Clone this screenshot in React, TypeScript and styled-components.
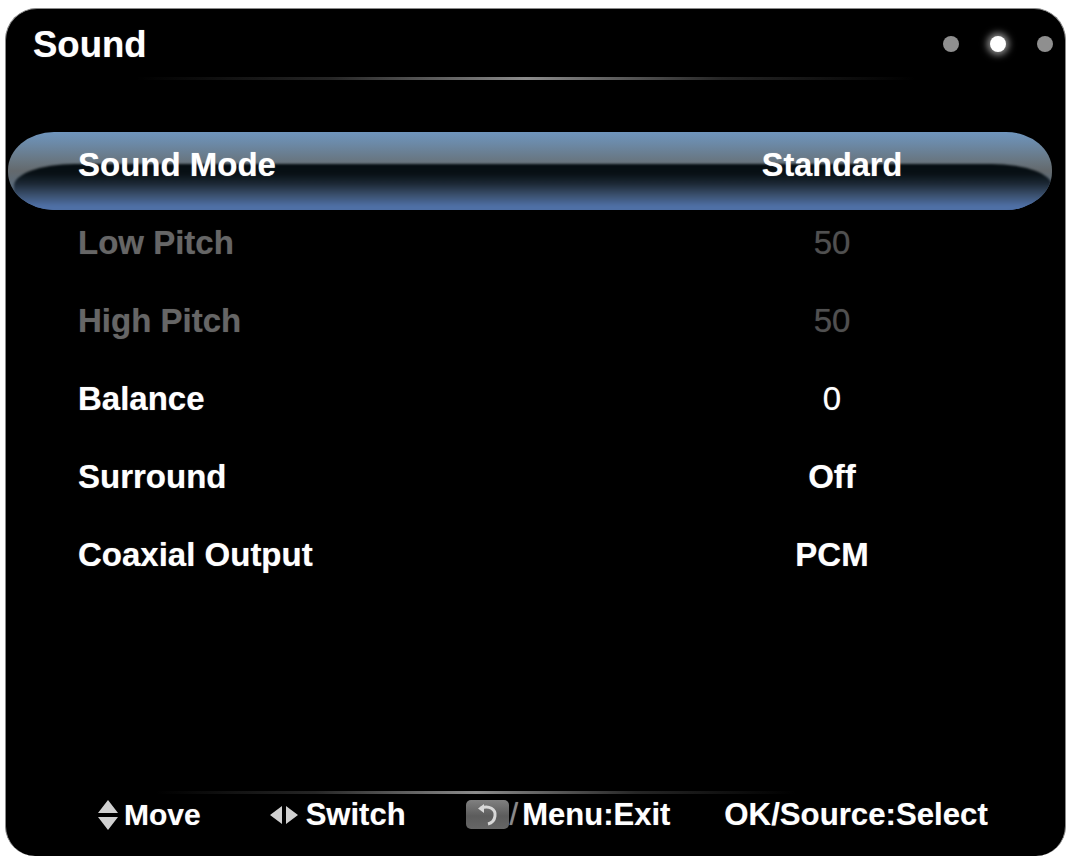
import React from 'react';
import styled, { createGlobalStyle } from 'styled-components';

const GlobalStyle = createGlobalStyle`
    html, body {
        margin: 0;
        padding: 0;
        background: #ffffff;
        overflow: hidden;
    }
`

const Panel = styled.div`
    box-sizing: border-box;
    width: 1061px;
    height: 848px;
    margin: 8px 0 0 5px;
    background: #000000;
    border: 1px solid #8a8a8a;
    border-bottom: none;
    border-radius: 32px 32px 30px 30px;
    font-family: "Liberation Sans", Arial, sans-serif;
    font-weight: 700;
    color: #ffffff;
    display: flex;
    flex-direction: column;
    overflow: hidden;
`

const Header = styled.div`
    height: 68px;
    padding: 2px 12px 0 27px;
    box-sizing: border-box;
    display: flex;
    justify-content: space-between;
    align-items: center;
`

const Title = styled.div`
    font-size: 36.5px;
    line-height: 72px;
    padding-top: 2px;
    text-shadow: 0 0 1px rgba(255, 255, 255, .5);
`

const Dots = styled.div`
    display: flex;
    align-items: center;
    gap: 31px;
`

const Dot = styled.span<{ $active?: boolean }>`
    width: 16px;
    height: 16px;
    border-radius: 50%;
    background: ${p => p.$active ? '#ffffff' : '#8f8f8f'};
    box-shadow: ${p => p.$active ? '0 0 7px 3px rgba(255,255,255,.55)' : 'none'};
    filter: blur(.6px);
`

const Divider = styled.div<{ $left: number, $width: number }>`
    height: 3px;
    width: ${p => p.$width}px;
    margin-left: ${p => p.$left}px;
    flex: none;
    background: linear-gradient(90deg, rgba(150,150,150,0), rgba(150,150,150,.25) 25%, #8c8c8c 50%, rgba(150,150,150,.25) 75%, rgba(150,150,150,0));
`

const List = styled.div`
    margin: 52px 13px 0 2px;
    flex: 1;
`

const Row = styled.div<{ $selected?: boolean, $disabled?: boolean }>`
    position: relative;
    box-sizing: border-box;
    height: 78px;
    padding: 0 80px 12px 70px;
    display: grid;
    grid-template-columns: 1fr 280px;
    align-items: center;
    font-size: 33px;
    color: ${p => p.$disabled ? '#666666' : '#ffffff'};
    text-shadow: 0 0 1px ${p => p.$disabled ? 'rgba(102,102,102,.5)' : 'rgba(255,255,255,.5)'};
    border-radius: 46px / 38px;
    overflow: hidden;
    background: ${p => p.$selected ? 'linear-gradient(180deg, #6f95bd 0%, #6c8aa8 14%, #68757f 38%, #63696d 50%, #566b80 78%, #4d6fa6 100%)' : 'transparent'};

    ${p => p.$selected && `
        &::before {
            content: '';
            position: absolute;
            left: 6px;
            right: 0;
            top: 32px;
            bottom: -2px;
            border-radius: 60px 60px 40px 40px / 22px 22px 18px 18px;
            background: linear-gradient(180deg, #050e12 0%, #081015 20%, #1b2733 40%, #3a4f6c 64%, #4f70a6 88%);
            filter: blur(1px);
        }
    `}
`

const Label = styled.span`
    position: relative;
`

const Value = styled.span<{ $regular?: boolean, $size?: number, $dim?: boolean }>`
    position: relative;
    text-align: center;
    font-weight: ${p => p.$regular ? 400 : 700};
    font-size: ${p => p.$size ?? 33}px;
    color: ${p => p.$dim ? '#505050' : 'inherit'};
`

const Footer = styled.div`
    box-sizing: border-box;
    height: 40px;
    padding: 1px 0 0 91px;
    display: flex;
    align-items: center;
    text-shadow: 0 0 1px rgba(255, 255, 255, .4);
    flex: none;
    margin-bottom: 22px;
`

const Hint = styled.div<{ $gap: number, $size?: number }>`
    display: flex;
    align-items: center;
    margin-right: ${p => p.$gap}px;
    font-size: ${p => p.$size ?? 31}px;
    white-space: nowrap;
`

const ArrowIcon = styled.svg<{ $space: number }>`
    flex: none;
    margin-right: ${p => p.$space}px;
    filter: blur(.5px);
`

const BackKey = styled.span`
    width: 43px;
    height: 29px;
    border-radius: 5px;
    background: linear-gradient(180deg, #808080, #5c5c5c 55%, #666666);
    display: inline-flex;
    align-items: center;
    justify-content: center;
    flex: none;
`

const Slash = styled.span`
    font-weight: 400;
    color: #8a8a8a;
    margin: 0 4px 0 1px;
`

const settings = [
    { label: 'Sound Mode', value: 'Standard', selected: true },
    { label: 'Low Pitch', value: '50', disabled: true, regular: true },
    { label: 'High Pitch', value: '50', disabled: true, regular: true },
    { label: 'Balance', value: '0', regular: true },
    { label: 'Surround', value: 'Off' },
    { label: 'Coaxial Output', value: 'PCM' },
]

const App: React.FunctionComponent = () => {
    return (
        <>
            <GlobalStyle />
            <Panel>
                <Header>
                    <Title>Sound</Title>
                    <Dots>
                        <Dot />
                        <Dot $active />
                        <Dot />
                    </Dots>
                </Header>
                <Divider $left={130} $width={780} />
                <List>
                    {settings.map(item => (
                        <Row key={item.label} $selected={item.selected} $disabled={item.disabled}>
                            <Label>{item.label}</Label>
                            <Value $regular={item.regular} $dim={item.disabled} $size={item.selected ? 32.4 : 33}>{item.value}</Value>
                        </Row>
                    ))}
                </List>
                <Divider $left={150} $width={640} />
                <Footer>
                    <Hint $gap={68} $size={30}>
                        <ArrowIcon $space={5} width="22" height="32" viewBox="0 0 22 32">
                            <path d="M11 1 L21 14 H1 Z M1 18 H21 L11 31 Z" fill="#d0d0d0" />
                        </ArrowIcon>
                        Move
                    </Hint>
                    <Hint $gap={60}>
                        <ArrowIcon $space={7} width="30" height="20" viewBox="0 0 30 20">
                            <path d="M13 1 V19 L1 10 Z M17 1 L29 10 L17 19 Z" fill="#d0d0d0" />
                        </ArrowIcon>
                        Switch
                    </Hint>
                    <Hint $gap={54}>
                        <BackKey>
                            <svg width="24" height="22" viewBox="0 0 24 22" fill="none">
                                <path d="M6 4 C14 1 21 5 20 12 C19.5 16 17 19 13 20" stroke="#d8d8d8" strokeWidth="3" />
                                <path d="M9 0 L3 4.5 L9 9 Z" fill="#d8d8d8" />
                            </svg>
                        </BackKey>
                        <Slash>/</Slash>
                        Menu:Exit
                    </Hint>
                    <Hint $gap={0} $size={31.2}>OK/Source:Select</Hint>
                </Footer>
            </Panel>
        </>
    )
}

export default App;
